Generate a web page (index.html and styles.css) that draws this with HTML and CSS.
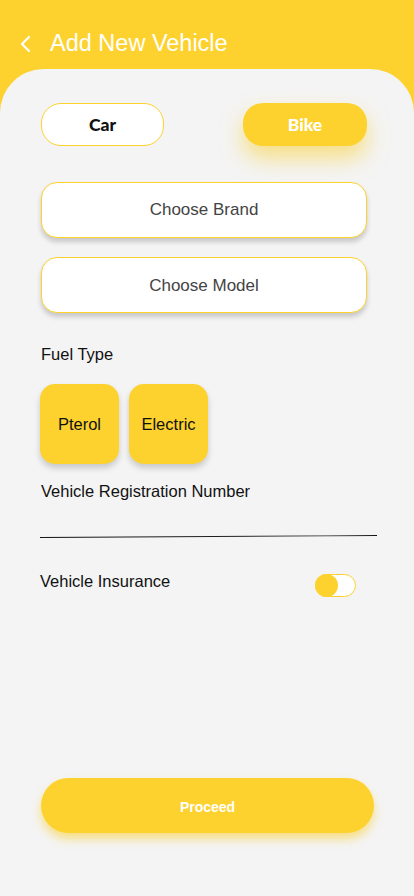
FILE: index.html
```html
<!DOCTYPE html>
<html lang="en">
<head>
<meta charset="utf-8">
<title>Add New Vehicle</title>
<link rel="stylesheet" href="styles.css">
</head>
<body>
<div class="app">
  <header class="topbar">
    <svg class="back" width="12" height="18" viewBox="0 0 12 18"><path d="M10 2 L3 9 L10 16" fill="none" stroke="#fff" stroke-width="2.2" stroke-linecap="round" stroke-linejoin="round"/></svg>
    <h1 class="title">Add New Vehicle</h1>
  </header>
  <main class="panel">
    <div class="type-row">
      <button class="pill pill-outline">Car</button>
      <button class="pill pill-filled">Bike</button>
    </div>
    <button class="select">Choose Brand</button>
    <button class="select select-second">Choose Model</button>
    <div class="label fuel-label">Fuel Type</div>
    <div class="fuel-row">
      <button class="fuel">Pterol</button>
      <button class="fuel">Electric</button>
    </div>
    <div class="label reg-label">Vehicle Registration Number</div>
    <div class="reg-line"></div>
    <div class="ins-row">
      <div class="label ins-label">Vehicle Insurance</div>
      <div class="toggle"><span class="knob"></span></div>
    </div>
    <button class="proceed">Proceed</button>
  </main>
</div>
</body>
</html>
```
FILE: styles.css
```css
* { box-sizing: border-box; }
html, body { margin: 0; padding: 0; }
body {
  background: #fdd22e;
  font-family: "Liberation Sans", Arial, sans-serif;
}
.app { width: 414px; height: 896px; display: flex; flex-direction: column; overflow: hidden; }
.topbar {
  height: 69px;
  display: flex;
  align-items: flex-start;
  padding: 31px 0 0 19px;
}
.back { margin-top: 4px; }
.title {
  margin: 0 0 0 19px;
  font-weight: 400;
  font-size: 23.5px;
  line-height: 24px;
  color: #fff;
}
.panel {
  flex: 1;
  background: #f4f4f4;
  border-radius: 44px 44px 0 0;
  display: flex;
  flex-direction: column;
  padding: 34px 47px 63px 41px;
}
button {
  font-family: inherit;
  border: none;
  padding: 0;
  cursor: pointer;
}
.type-row { display: flex; justify-content: space-between; }
.pill {
  width: 123px;
  height: 43px;
  border-radius: 20px;
  font-family: Lato, "Liberation Sans", sans-serif;
  font-weight: 900;
  font-size: 17.5px;
}
.pill-outline { background: #fff; border: 1px solid #fdd22e; color: #111; }
.pill-filled {
  width: 124px;
  background: #fdd22e;
  color: #fff;
  box-shadow: 0 12px 22px rgba(250, 205, 40, 0.55);
}
.select {
  height: 56px;
  margin-top: 36px;
  background: #fff;
  border: 1px solid #fdd22e;
  border-radius: 16px;
  font-size: 17px;
  color: #444;
  box-shadow: 0 4px 5px rgba(0, 0, 0, 0.18);
}
.select-second { margin-top: 19px; }
.select-second { padding-top: 2px; }
.label { font-size: 16.5px; line-height: 18px; color: #111; }
.fuel-label { margin-top: 32px; }
.fuel-row { display: flex; gap: 10px; margin-top: 21px; margin-left: -1px; }
.fuel {
  width: 79px;
  height: 80px;
  border-radius: 15px;
  background: #fdd22e;
  font-size: 16.5px;
  color: #111;
  box-shadow: 0 4px 6px rgba(0, 0, 0, 0.18);
}
.reg-label { margin-top: 18px; }
.reg-line {
  margin-top: 36px;
  margin-left: -1px;
  width: 337px;
  height: 1px;
  background: linear-gradient(90deg, #111 0%, #222 60%, #555 85%, #111 100%);
  transform: rotate(-0.3deg);
}
.ins-row {
  margin-top: 35px;
  margin-left: -1px;
  display: flex;
  justify-content: space-between;
  align-items: flex-start;
  padding-right: 11px;
}
.toggle {
  margin-top: 2px;
  width: 41px;
  height: 23px;
  border-radius: 12px;
  background: #fff;
  border: 1px solid #fdd22e;
  position: relative;
}
.knob {
  position: absolute;
  left: -1px;
  top: -1px;
  width: 23px;
  height: 23px;
  border-radius: 50%;
  background: #fdd22e;
}
.proceed {
  margin-top: auto;
  width: 333px;
  height: 55px;
  border-radius: 28px;
  background: #fdd22e;
  color: #fff;
  font-weight: 700;
  font-size: 14px;
  padding-top: 2px;
  box-shadow: 0 6px 10px rgba(250, 205, 40, 0.55);
}
```
